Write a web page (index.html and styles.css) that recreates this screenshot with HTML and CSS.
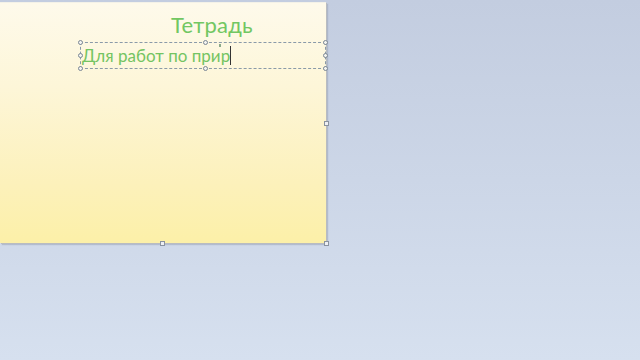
FILE: index.html
```html
<!DOCTYPE html>
<html lang="ru">
<head>
<meta charset="utf-8">
<link rel="stylesheet" href="styles.css">
</head>
<body>
<div class="workspace">
  <div class="slide">
    <div class="title">Тетрадь</div>
    <div class="textbox">
      <span class="text">Для работ по прир</span><span class="caret"></span>
      <span class="h h-tl"></span><span class="h h-tm"></span><span class="h h-tr"></span>
      <span class="h h-ml"></span><span class="h h-mr"></span>
      <span class="h h-bl"></span><span class="h h-bm"></span><span class="h h-br"></span>
      <span class="rot"></span>
    </div>
    <span class="sh sh-mr"></span><span class="sh sh-bm"></span><span class="sh sh-br"></span>
  </div>
</div>
</body>
</html>
```
FILE: styles.css
```css
html, body {
  margin: 0;
  padding: 0;
  width: 640px;
  height: 360px;
  overflow: hidden;
}
body {
  background: linear-gradient(180deg, #c3cde0 0%, #ccd6e7 50%, #d6e0ef 100%);
  font-family: "Lato", "Noto Sans", sans-serif;
}
.workspace {
  padding-top: 2px;
}
.slide {
  position: relative;
  width: 326px;
  height: 240px;
  border-top: 1px solid #f4f2e8;
  background: linear-gradient(180deg, #fefaeb 0%, #fdf6d8 35%, #fcf1bb 75%, #fcf0a8 100%);
  box-shadow: 1px 1px 0 #b9bcc0, 2px 2px 1px rgba(150,160,180,0.5);
}
.title {
  color: #72c762;
  font-size: 22px;
  line-height: 26px;
  padding-top: 9px;
  padding-left: 171px;
  letter-spacing: 0.2px;
}
.textbox {
  position: relative;
  margin-top: 4px;
  margin-left: 80px;
  width: 246px;
  height: 27px;
  border: 1px dashed #8a9aa8;
  box-sizing: border-box;
  display: flex;
  align-items: center;
  padding-left: 1px;
}
.text {
  color: #74c462;
  font-size: 17px;
  line-height: 22px;
  white-space: nowrap;
}
.caret {
  display: inline-block;
  width: 1px;
  height: 19px;
  background: #333;
  margin-left: 0;
}
.h {
  position: absolute;
  width: 3px;
  height: 3px;
  border: 1px solid #7b8794;
  border-radius: 50%;
  background: #f4f4f0;
}
.h-tl { left: -3px; top: -3px; }
.h-tm { left: 122px; top: -3px; }
.h-tr { right: -3px; top: -3px; }
.h-ml { left: -3px; top: 10px; }
.h-mr { right: -3px; top: 10px; }
.h-bl { left: -3px; bottom: -3px; }
.h-bm { left: 122px; bottom: -3px; }
.h-br { right: -3px; bottom: -3px; }
.rot {
  position: absolute;
  left: 138px;
  top: 1px;
  width: 2px;
  height: 3px;
  background: #8aa888;
}
.sh {
  position: absolute;
  width: 3px;
  height: 3px;
  border: 1px solid #8a93a0;
  background: #eef0f4;
}
.sh-mr { right: -3px; top: 118px; }
.sh-bm { left: 160px; bottom: -3px; }
.sh-br { right: -3px; bottom: -3px; }
```
